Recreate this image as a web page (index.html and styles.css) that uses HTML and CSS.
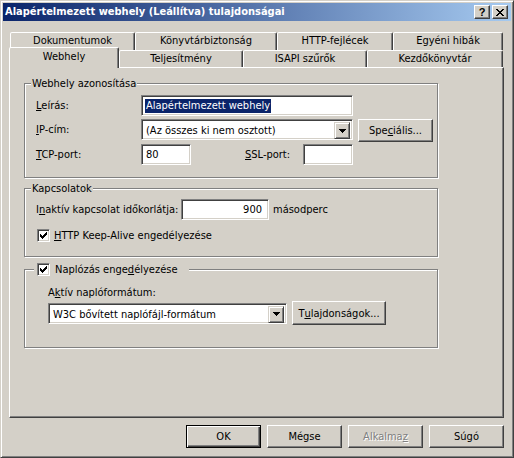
FILE: index.html
```html
<!DOCTYPE html>
<html lang="hu">
<head>
<meta charset="utf-8">
<title>Alapértelmezett webhely (Leállítva) tulajdonságai</title>
<link rel="stylesheet" href="styles.css">
</head>
<body>
<div class="window">
  <div class="titlebar">
    <span class="title">Alapértelmezett webhely (Leállítva) tulajdonságai</span>
    <div class="caption-buttons">
      <span class="cap-btn help">?</span>
      <span class="cap-btn close"><svg width="8" height="7" viewBox="0 0 8 7" shape-rendering="crispEdges"><path fill="#000" d="M0 0h2v1H0z M6 0h2v1H6z M1 1h2v1H1z M5 1h2v1H5z M2 2h4v1H2z M3 3h2v1H3z M2 4h4v1H2z M1 5h2v1H1z M5 5h2v1H5z M0 6h2v1H0z M6 6h2v1H6z"/></svg></span>
    </div>
  </div>

  <div class="tabs">
    <div class="tab-row back">
      <div class="tab t-dok">Dokumentumok</div>
      <div class="tab t-konyv">Könyvtárbiztonság</div>
      <div class="tab t-http">HTTP-fejlécek</div>
      <div class="tab t-egyeni">Egyéni hibák</div>
    </div>
    <div class="tab-row front">
      <div class="tab selected t-web">Webhely</div>
      <div class="tab t-telj">Teljesítmény</div>
      <div class="tab t-isapi">ISAPI szűrők</div>
      <div class="tab t-kezdo">Kezdőkönyvtár</div>
    </div>
  </div>

  <div class="panel">
    <div class="group g1">
      <div class="group-title">Webhely azonosítása</div>
      <div class="row r1">
        <span class="lbl"><u>L</u>eírás:</span>
        <div class="edit e-desc"><span class="sel">Alapértelmezett webhely</span></div>
      </div>
      <div class="row r2">
        <span class="lbl"><u>I</u>P-cím:</span>
        <div class="combo c-ip">
          <span class="combo-text">(Az összes ki nem osztott)</span>
          <span class="drop"><svg width="7" height="4" viewBox="0 0 7 4" shape-rendering="crispEdges"><path fill="#000" d="M0 0h7v1H0z M1 1h5v1H1z M2 2h3v1H2z M3 3h1v1H3z"/></svg></span>
        </div>
        <div class="btn b-spec">Spe<u>c</u>iális...</div>
      </div>
      <div class="row r3">
        <span class="lbl"><u>T</u>CP-port:</span>
        <div class="edit e-port">80</div>
        <span class="lbl-ssl"><u>S</u>SL-port:</span>
        <div class="edit e-port"></div>
      </div>
    </div>

    <div class="group g2">
      <div class="group-title">Kapcsolatok</div>
      <div class="row r-timeout">
        <span class="lbl-timeout">I<u>n</u>aktív kapcsolat időkorlátja:</span>
        <div class="edit e-timeout">900</div>
        <span class="unit">másodperc</span>
      </div>
      <div class="row r-keep">
        <span class="check"><svg width="7" height="7" viewBox="0 0 7 7" shape-rendering="crispEdges"><path fill="#000" d="M6 0h1v1H6z M5 1h2v1H5z M0 2h1v1H0z M4 2h3v1H4z M0 3h2v1H0z M3 3h3v1H3z M0 4h5v1H0z M1 5h3v1H1z M2 6h1v1H2z"/></svg></span>
        <span class="check-label"><u>H</u>TTP Keep-Alive engedélyezése</span>
      </div>
    </div>

    <div class="group g3">
      <div class="group-legend">
        <span class="check"><svg width="7" height="7" viewBox="0 0 7 7" shape-rendering="crispEdges"><path fill="#000" d="M6 0h1v1H6z M5 1h2v1H5z M0 2h1v1H0z M4 2h3v1H4z M0 3h2v1H0z M3 3h3v1H3z M0 4h5v1H0z M1 5h3v1H1z M2 6h1v1H2z"/></svg></span>
        <span class="check-label">Naplózás enge<u>d</u>élyezése</span>
      </div>
      <div class="log-label">A<u>k</u>tív naplóformátum:</div>
      <div class="row r-log">
        <div class="combo c-log">
          <span class="combo-text">W3C bővített naplófájl-formátum</span>
          <span class="drop"><svg width="7" height="4" viewBox="0 0 7 4" shape-rendering="crispEdges"><path fill="#000" d="M0 0h7v1H0z M1 1h5v1H1z M2 2h3v1H2z M3 3h1v1H3z"/></svg></span>
        </div>
        <div class="btn b-props">T<u>u</u>lajdonságok...</div>
      </div>
    </div>
  </div>

  <div class="footer">
    <div class="btn default">OK</div>
    <div class="btn">Mégse</div>
    <div class="btn disabled">Alkalma<u>z</u></div>
    <div class="btn">Súgó</div>
  </div>
</div>
</body>
</html>
```
FILE: styles.css
```css
* { box-sizing: border-box; }
html, body { margin: 0; padding: 0; }
body {
  width: 514px;
  height: 458px;
  overflow: hidden;
  background: #D4D0C8;
  font-family: "DejaVu Sans Condensed", "Liberation Sans", sans-serif;
  font-size: 11px;
  color: #000;
}
u { text-decoration: underline; text-underline-offset: 1px; }

.window {
  width: 514px;
  height: 458px;
  background: #D4D0C8;
  border: 1px solid;
  border-color: #D4D0C8 #404040 #404040 #D4D0C8;
  box-shadow: inset 1px 1px #fff, inset -1px -1px #808080;
  padding: 2px;
  display: flex;
  flex-direction: column;
}

/* Title bar */
.titlebar {
  height: 18px;
  flex: none;
  background: linear-gradient(to right, #0A246A, #A6CAF0);
  display: flex;
  align-items: center;
  justify-content: space-between;
  padding: 0 3px 0 2px;
  color: #fff;
  font-weight: bold;
}
.title { line-height: 18px; white-space: nowrap; }
.caption-buttons { display: flex; gap: 2px; }
.cap-btn {
  width: 16px;
  height: 14px;
  background: #D4D0C8;
  border: 1px solid;
  border-color: #fff #404040 #404040 #fff;
  box-shadow: inset -1px -1px #808080;
  display: flex;
  align-items: center;
  justify-content: center;
  color: #000;
  font-family: "Liberation Sans", sans-serif;
  font-weight: bold;
  font-size: 11px;
  line-height: 12px;
}

/* Tabs */
.tabs { margin: 11px 7px 0 6px; flex: none; }
.tab-row { display: flex; }
.tab-row.back { height: 18px; margin-left: 1px; }
.tab-row.front { height: 17px; align-items: flex-start; }
.tab {
  background: #D4D0C8;
  border: 1px solid;
  border-bottom: none;
  border-color: #fff #404040 transparent #fff;
  box-shadow: inset -1px 0 #808080;
  border-radius: 2px 2px 0 0;
  text-align: center;
  line-height: 16px;
  white-space: nowrap;
}
.back .tab { height: 18px; }
.front .tab { height: 17px; }
.tab.selected {
  height: 21px;
  margin-top: -3px;
  padding-top: 1px;
  position: relative;
  z-index: 1;
}
.t-dok { width: 125px; }
.t-konyv { width: 142px; }
.t-http { width: 116px; }
.t-egyeni { width: 110px; }
.t-web { width: 110px; }
.t-telj { width: 124px; }
.t-isapi { width: 124px; }
.t-kezdo { width: 136px; }

/* Panel */
.panel {
  flex: none;
  margin: 0 7px 0 6px;
  height: 351px;
  border: 1px solid;
  border-color: #fff #404040 #404040 #fff;
  box-shadow: inset -1px -1px #808080;
  padding: 15px 0 0 14px;
}

.group {
  width: 414px;
  border: 1px solid #808080;
  box-shadow: inset 1px 1px #fff, 1px 1px #fff;
  padding-left: 11px;
}
.g1 { height: 95px; }
.g2 { height: 69px; margin-top: 10px; }
.g3 { height: 79px; margin-top: 12px; }

.group-title {
  display: table;
  margin: -7px 0 0 -5px;
  padding: 0 1px;
  line-height: 13px;
  background: #D4D0C8;
}

.row { display: flex; align-items: flex-start; }
.lbl { width: 105px; line-height: 21px; }
.g1 .r1 { margin-top: 5px; height: 21px; }
.g1 .r2 { margin-top: 3px; height: 23px; }
.g1 .r3 { margin-top: 2px; height: 21px; }

/* Sunken edit */
.edit {
  height: 21px;
  background: #fff;
  border: 1px solid;
  border-color: #808080 #fff #fff #808080;
  box-shadow: inset 1px 1px #404040, inset -1px -1px #D4D0C8;
  padding: 0 3px 0 4px;
  line-height: 19px;
  white-space: nowrap;
  overflow: hidden;
}
.e-desc { width: 212px; padding-left: 3px; display: flex; align-items: center; }
.sel {
  background: #0A246A;
  color: #fff;
  line-height: 14px;
  padding: 0 1px;
}
.e-port { width: 50px; }
.lbl-ssl { margin-left: 54px; width: 58px; line-height: 21px; }

/* Combo */
.combo {
  display: flex;
  height: 21px;
  background: #fff;
  border: 1px solid;
  border-color: #808080 #fff #fff #808080;
  box-shadow: inset 1px 1px #404040, inset -1px -1px #D4D0C8;
  padding: 2px;
}
.combo-text { flex: 1; padding-left: 2px; line-height: 17px; white-space: nowrap; overflow: hidden; }
.drop {
  width: 16px;
  height: 17px;
  flex: none;
  background: #D4D0C8;
  border: 1px solid;
  border-color: #D4D0C8 #404040 #404040 #D4D0C8;
  box-shadow: inset 1px 1px #fff, inset -1px -1px #808080;
  display: flex;
  align-items: center;
  justify-content: center;
}
.drop svg { display: block; }
.c-ip { width: 212px; }
.c-log { width: 239px; }

/* Buttons */
.btn {
  height: 23px;
  background: #D4D0C8;
  border: 1px solid;
  border-color: #fff #404040 #404040 #fff;
  box-shadow: inset -1px -1px #808080;
  display: flex;
  align-items: center;
  justify-content: center;
  white-space: nowrap;
}
.b-spec { width: 75px; margin-left: 5px; }
.b-props { width: 94px; height: 24px; margin-left: 5px; }
.btn.default {
  border: 1px solid #000;
  box-shadow: inset 1px 1px #fff, inset -1px -1px #404040, inset -2px -2px #808080;
}
.btn.disabled { color: #808080; text-shadow: 1px 1px 0 #fff; }

/* Group 2 */
.r-timeout { margin-top: 4px; height: 21px; }
.lbl-timeout { width: 145px; line-height: 21px; }
.e-timeout { width: 88px; text-align: right; padding-right: 6px; }
.unit { margin-left: 4px; line-height: 21px; }
.r-keep { margin-top: 9px; margin-left: 1px; align-items: center; height: 13px; }

.check {
  width: 13px;
  height: 13px;
  flex: none;
  background: #fff;
  border: 1px solid;
  border-color: #808080 #fff #fff #808080;
  box-shadow: inset 1px 1px #404040, inset -1px -1px #D4D0C8;
  display: flex;
  align-items: center;
  justify-content: center;
}
.check svg { display: block; }
.check-label { margin-left: 4px; line-height: 13px; white-space: nowrap; }

/* Group 3 */
.group-legend {
  display: flex;
  width: max-content;
  align-items: center;
  height: 13px;
  margin: -7px 0 0 -2px;
  padding: 0 12px 0 3px;
  background: #D4D0C8;
}
.group-legend .check-label { margin-left: 5px; }
.log-label { margin: 10px 0 0 12px; line-height: 13px; }
.r-log { margin: 2px 0 0 12px; align-items: center; height: 24px; }

/* Footer */
.footer {
  display: flex;
  justify-content: flex-end;
  gap: 6px;
  margin-top: 7px;
  padding-right: 7px;
}
.footer .btn { width: 75px; }
```
